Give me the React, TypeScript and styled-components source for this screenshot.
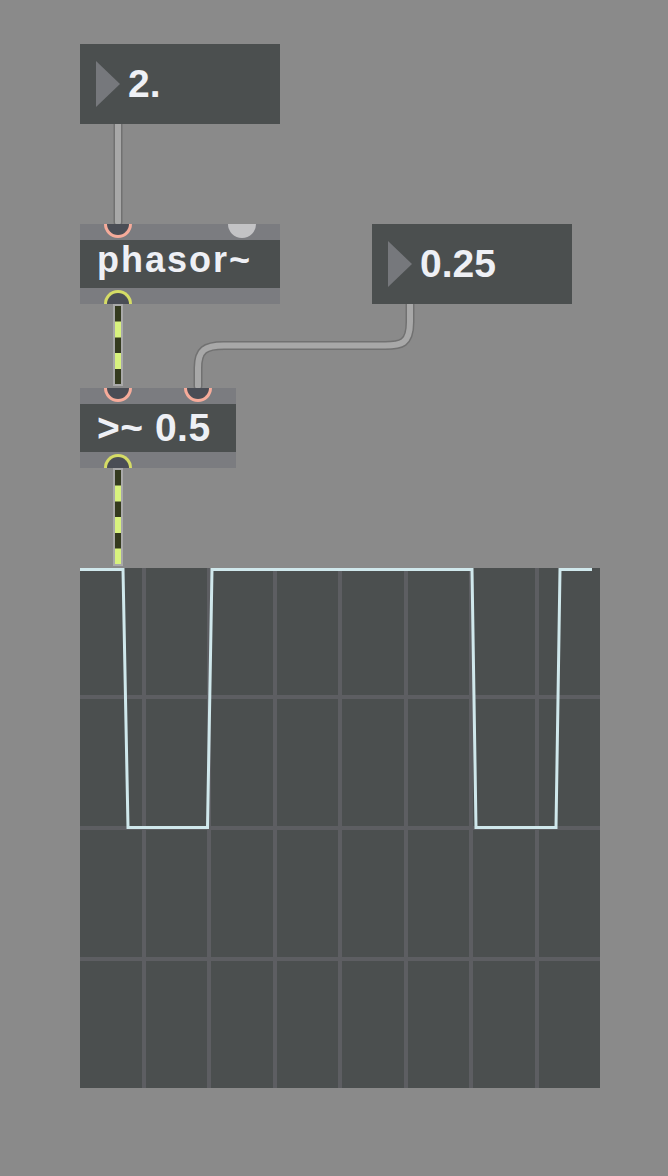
import React from "react";
import styled, { createGlobalStyle } from "styled-components";

const GlobalStyle = createGlobalStyle`
  html, body {
    margin: 0;
    padding: 0;
    background: #8a8a8a;
  }
`;

// the patcher is a free canvas: boxes sit where the patch puts them
const Canvas = styled.div`
  position: relative;
  width: 668px;
  height: 1176px;
  background: #8a8a8a;
  overflow: hidden;
  font-family: "Liberation Sans", Arial, sans-serif;
`;

const CordLayer = styled.svg`
  position: absolute;
  left: 0;
  top: 0;
`;

const Node = styled.div<{ $x: number; $y: number; $w: number }>`
  position: absolute;
  left: ${(p) => p.$x}px;
  top: ${(p) => p.$y}px;
  width: ${(p) => p.$w}px;
`;

const NumberBody = styled.div`
  display: flex;
  align-items: center;
  gap: 8px;
  height: 80px;
  padding-left: 16px;
  box-sizing: border-box;
  background: #4b4f4f;
`;

const Arrow = styled.div`
  width: 0;
  height: 0;
  border-left: 24px solid #76787c;
  border-top: 23.5px solid transparent;
  border-bottom: 23.5px solid transparent;
`;

const Value = styled.span`
  margin-top: -2px;
  font-size: 39px;
  line-height: 39px;
  font-weight: 700;
  color: #eef0f5;
`;

const ObjectBody = styled.div`
  display: flex;
  flex-direction: column;
`;

const Strip = styled.div`
  position: relative;
  height: 16px;
  background: #7b7c80;
`;

const Label = styled.div<{ $size: number; $spacing: number; $pad: number }>`
  height: 48px;
  box-sizing: border-box;
  padding: ${(p) => p.$pad}px 0 0 17px;
  background: #4b4f4f;
  font-size: ${(p) => p.$size}px;
  letter-spacing: ${(p) => p.$spacing}px;
  line-height: ${(p) => p.$size}px;
  font-weight: 700;
  color: #eef0f5;
  white-space: nowrap;
`;

const Inlet = styled.div<{ $cx: number; $kind: "signal" | "control" }>`
  position: absolute;
  top: 0;
  left: ${(p) => p.$cx - 14}px;
  width: 28px;
  height: 14px;
  box-sizing: border-box;
  border-radius: 0 0 14px 14px;
  ${(p) =>
    p.$kind === "signal"
      ? `border: 3px solid #f6ab9a; border-top: none; background: #4a4d55;`
      : `background: #c3c3c5;`}
`;

const Outlet = styled.div<{ $cx: number }>`
  position: absolute;
  bottom: 0;
  left: ${(p) => p.$cx - 14}px;
  width: 28px;
  height: 14px;
  box-sizing: border-box;
  border-radius: 14px 14px 0 0;
  border: 3px solid #d5dc66;
  border-bottom: none;
  background: #4a4d55;
`;

const Scope = styled.div`
  position: absolute;
  left: 80px;
  top: 568px;
  width: 520px;
  height: 520px;
  display: grid;
  grid-template-columns: repeat(8, 1fr);
  grid-template-rows: repeat(4, 1fr);
  gap: 4px;
  background: #5d5e62;
`;

const Cell = styled.div`
  background: #4b4f4f;
`;

const Wave = styled.svg`
  position: absolute;
  left: 0;
  top: 0;
`;

type NumberProps = { x: number; y: number; value: string };

const NumberBox = ({ x, y, value }: NumberProps) => (
  <Node $x={x} $y={y} $w={200}>
    <NumberBody>
      <Arrow />
      <Value>{value}</Value>
    </NumberBody>
  </Node>
);

type ObjProps = {
  x: number;
  y: number;
  w: number;
  text: string;
  size: number;
  spacing: number;
  pad: number;
  inlets: { cx: number; kind: "signal" | "control" }[];
  outlets: number[];
};

const ObjectBox = ({ x, y, w, text, size, spacing, pad, inlets, outlets }: ObjProps) => (
  <Node $x={x} $y={y} $w={w}>
    <ObjectBody>
      <Strip>
        {inlets.map((i) => (
          <Inlet key={i.cx} $cx={i.cx} $kind={i.kind} />
        ))}
      </Strip>
      <Label $size={size} $spacing={spacing} $pad={pad}>
        {text}
      </Label>
      <Strip>
        {outlets.map((cx) => (
          <Outlet key={cx} $cx={cx} />
        ))}
      </Strip>
    </ObjectBody>
  </Node>
);

const ControlCord = ({ d }: { d: string }) => (
  <g fill="none" strokeLinecap="round" strokeLinejoin="round">
    <path d={d} stroke="#717171" strokeWidth={9} />
    <path d={d} stroke="#a8a8a8" strokeWidth={6} />
  </g>
);

const SignalCord = ({ x, y1, y2 }: { x: number; y1: number; y2: number }) => (
  <g>
    <rect x={x - 5} y={y1} width={10} height={y2 - y1} fill="#a9a9a9" />
    <line x1={x} y1={y1 + 2} x2={x} y2={y2 - 2} stroke="#d8f27e" strokeWidth={6} />
    <line
      x1={x}
      y1={y1 + 2}
      x2={x}
      y2={y2 - 2}
      stroke="#343a1e"
      strokeWidth={6}
      strokeDasharray="15.5 16"
    />
  </g>
);

const wavePoints = [
  [0, 1.5],
  [43, 1.5],
  [48, 259.5],
  [127.5, 259.5],
  [132, 1.5],
  [392, 1.5],
  [396, 259.5],
  [476, 259.5],
  [480, 1.5],
  [512, 1.5],
];

export default function App() {
  return (
    <>
      <GlobalStyle />
      <Canvas>
        <CordLayer width={668} height={1176}>
          <ControlCord d="M118 124 V222" />
          <ControlCord d="M410 304 V322 C410 344 401 345.5 385 345.5 H224 C205 345.5 198 350 198 368 V386" />
          <SignalCord x={118} y1={304} y2={386} />
          <SignalCord x={118} y1={468} y2={566} />
        </CordLayer>

        <NumberBox x={80} y={44} value="2." />
        <NumberBox x={372} y={224} value="0.25" />

        <ObjectBox
          x={80}
          y={224}
          w={200}
          text="phasor~"
          size={36}
          spacing={2}
          pad={2}
          inlets={[
            { cx: 38, kind: "signal" },
            { cx: 162, kind: "control" },
          ]}
          outlets={[38]}
        />

        <ObjectBox
          x={80}
          y={388}
          w={156}
          text=">~ 0.5"
          size={39}
          spacing={0.5}
          pad={4}
          inlets={[
            { cx: 38, kind: "signal" },
            { cx: 118, kind: "signal" },
          ]}
          outlets={[38]}
        />

        <Scope>
          {Array.from({ length: 32 }).map((_, i) => (
            <Cell key={i} />
          ))}
          <Wave width={520} height={520}>
            <polyline
              points={wavePoints.map((p) => p.join(",")).join(" ")}
              fill="none"
              stroke="#d0e8ec"
              strokeWidth={3}
              strokeLinejoin="miter"
            />
          </Wave>
        </Scope>
      </Canvas>
    </>
  );
}
